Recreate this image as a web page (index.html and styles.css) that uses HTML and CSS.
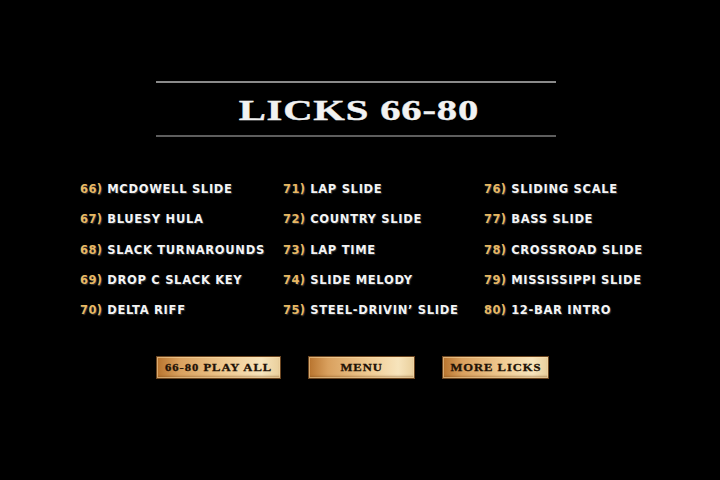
FILE: index.html
```html
<!DOCTYPE html>
<html>
<head>
<meta charset="utf-8">
<link rel="stylesheet" href="styles.css">
</head>
<body>
<div class="screen">
  <header class="banner">
    <div class="rule rule-top"></div>
    <h1 class="title"><span>LICKS 66-80</span></h1>
    <div class="rule rule-bottom"></div>
  </header>
  <ul class="licks">
    <li><span class="num">66)</span> MCDOWELL SLIDE</li>
    <li><span class="num">71)</span> LAP SLIDE</li>
    <li><span class="num">76)</span> SLIDING SCALE</li>
    <li><span class="num">67)</span> BLUESY HULA</li>
    <li><span class="num">72)</span> COUNTRY SLIDE</li>
    <li><span class="num">77)</span> BASS SLIDE</li>
    <li><span class="num">68)</span> SLACK TURNAROUNDS</li>
    <li><span class="num">73)</span> LAP TIME</li>
    <li><span class="num">78)</span> CROSSROAD SLIDE</li>
    <li><span class="num">69)</span> DROP C SLACK KEY</li>
    <li><span class="num">74)</span> SLIDE MELODY</li>
    <li><span class="num">79)</span> MISSISSIPPI SLIDE</li>
    <li><span class="num">70)</span> DELTA RIFF</li>
    <li><span class="num">75)</span> STEEL-DRIVIN’ SLIDE</li>
    <li><span class="num">80)</span> 12-BAR INTRO</li>
  </ul>
  <nav class="buttons">
    <div class="btn btn-wide"><span>66-80 PLAY ALL</span></div>
    <div class="btn"><span>MENU</span></div>
    <div class="btn"><span>MORE LICKS</span></div>
  </nav>
</div>
</body>
</html>
```
FILE: styles.css
```css
html, body {
  margin: 0;
  padding: 0;
  background: #000;
}
.screen {
  width: 720px;
  height: 480px;
  background: #000;
  overflow: hidden;
  display: flex;
  flex-direction: column;
}
.banner {
  margin: 81px 0 0 156px;
  width: 400px;
  display: flex;
  flex-direction: column;
}
.rule {
  height: 2px;
}
.rule-top {
  background: #8a8a8a;
}
.rule-bottom {
  background: #5e5e5e;
}
.title {
  margin: 0;
  height: 52px;
  display: flex;
  align-items: center;
  justify-content: center;
  font-family: "Liberation Serif", serif;
  font-weight: bold;
  font-size: 29px;
  color: #f2f2f2;
  padding-top: 2px;
  padding-left: 6px;
  box-sizing: border-box;
}
.title span {
  display: inline-block;
  letter-spacing: 0.6px;
  transform: scaleX(1.4);
  -webkit-text-stroke: 0.4px #f2f2f2;
}
.licks {
  list-style: none;
  margin: 44px 0 0 80px;
  padding: 0;
  display: grid;
  grid-template-columns: 203px 201px 180px;
  grid-auto-rows: 30.25px;
}
.licks li {
  font-family: "DejaVu Sans", sans-serif;
  font-weight: bold;
  font-size: 11.5px;
  letter-spacing: 0.7px;
  color: #f4f4f4;
  line-height: 16px;
  white-space: nowrap;
  text-shadow: 1px 1px 1px rgba(90, 90, 90, 0.6);
}
.licks .num {
  color: #e8b862;
  letter-spacing: 0.4px;
}
.buttons {
  margin: 24px 0 0 156px;
  display: flex;
  gap: 27px;
}
.btn {
  width: 107px;
  height: 23px;
  box-sizing: border-box;
  border: 1px solid #6b4520;
  background: linear-gradient(90deg, #b8742e 0%, #d9a05e 18%, #efc990 55%, #f7e4bc 85%, #e9cf9c 100%);
  box-shadow: inset 0 0 0 1px rgba(255, 230, 180, 0.5), inset 0 -2px 2px rgba(120, 70, 20, 0.4);
  display: flex;
  align-items: center;
  justify-content: center;
  font-family: "Liberation Serif", serif;
  font-weight: bold;
  font-size: 10.5px;
  color: #1e1206;
}
.btn span {
  display: inline-block;
  letter-spacing: 0.8px;
  transform: scaleX(1.2);
  -webkit-text-stroke: 0.3px #1e1206;
}
.btn-wide {
  width: 125px;
}
```
